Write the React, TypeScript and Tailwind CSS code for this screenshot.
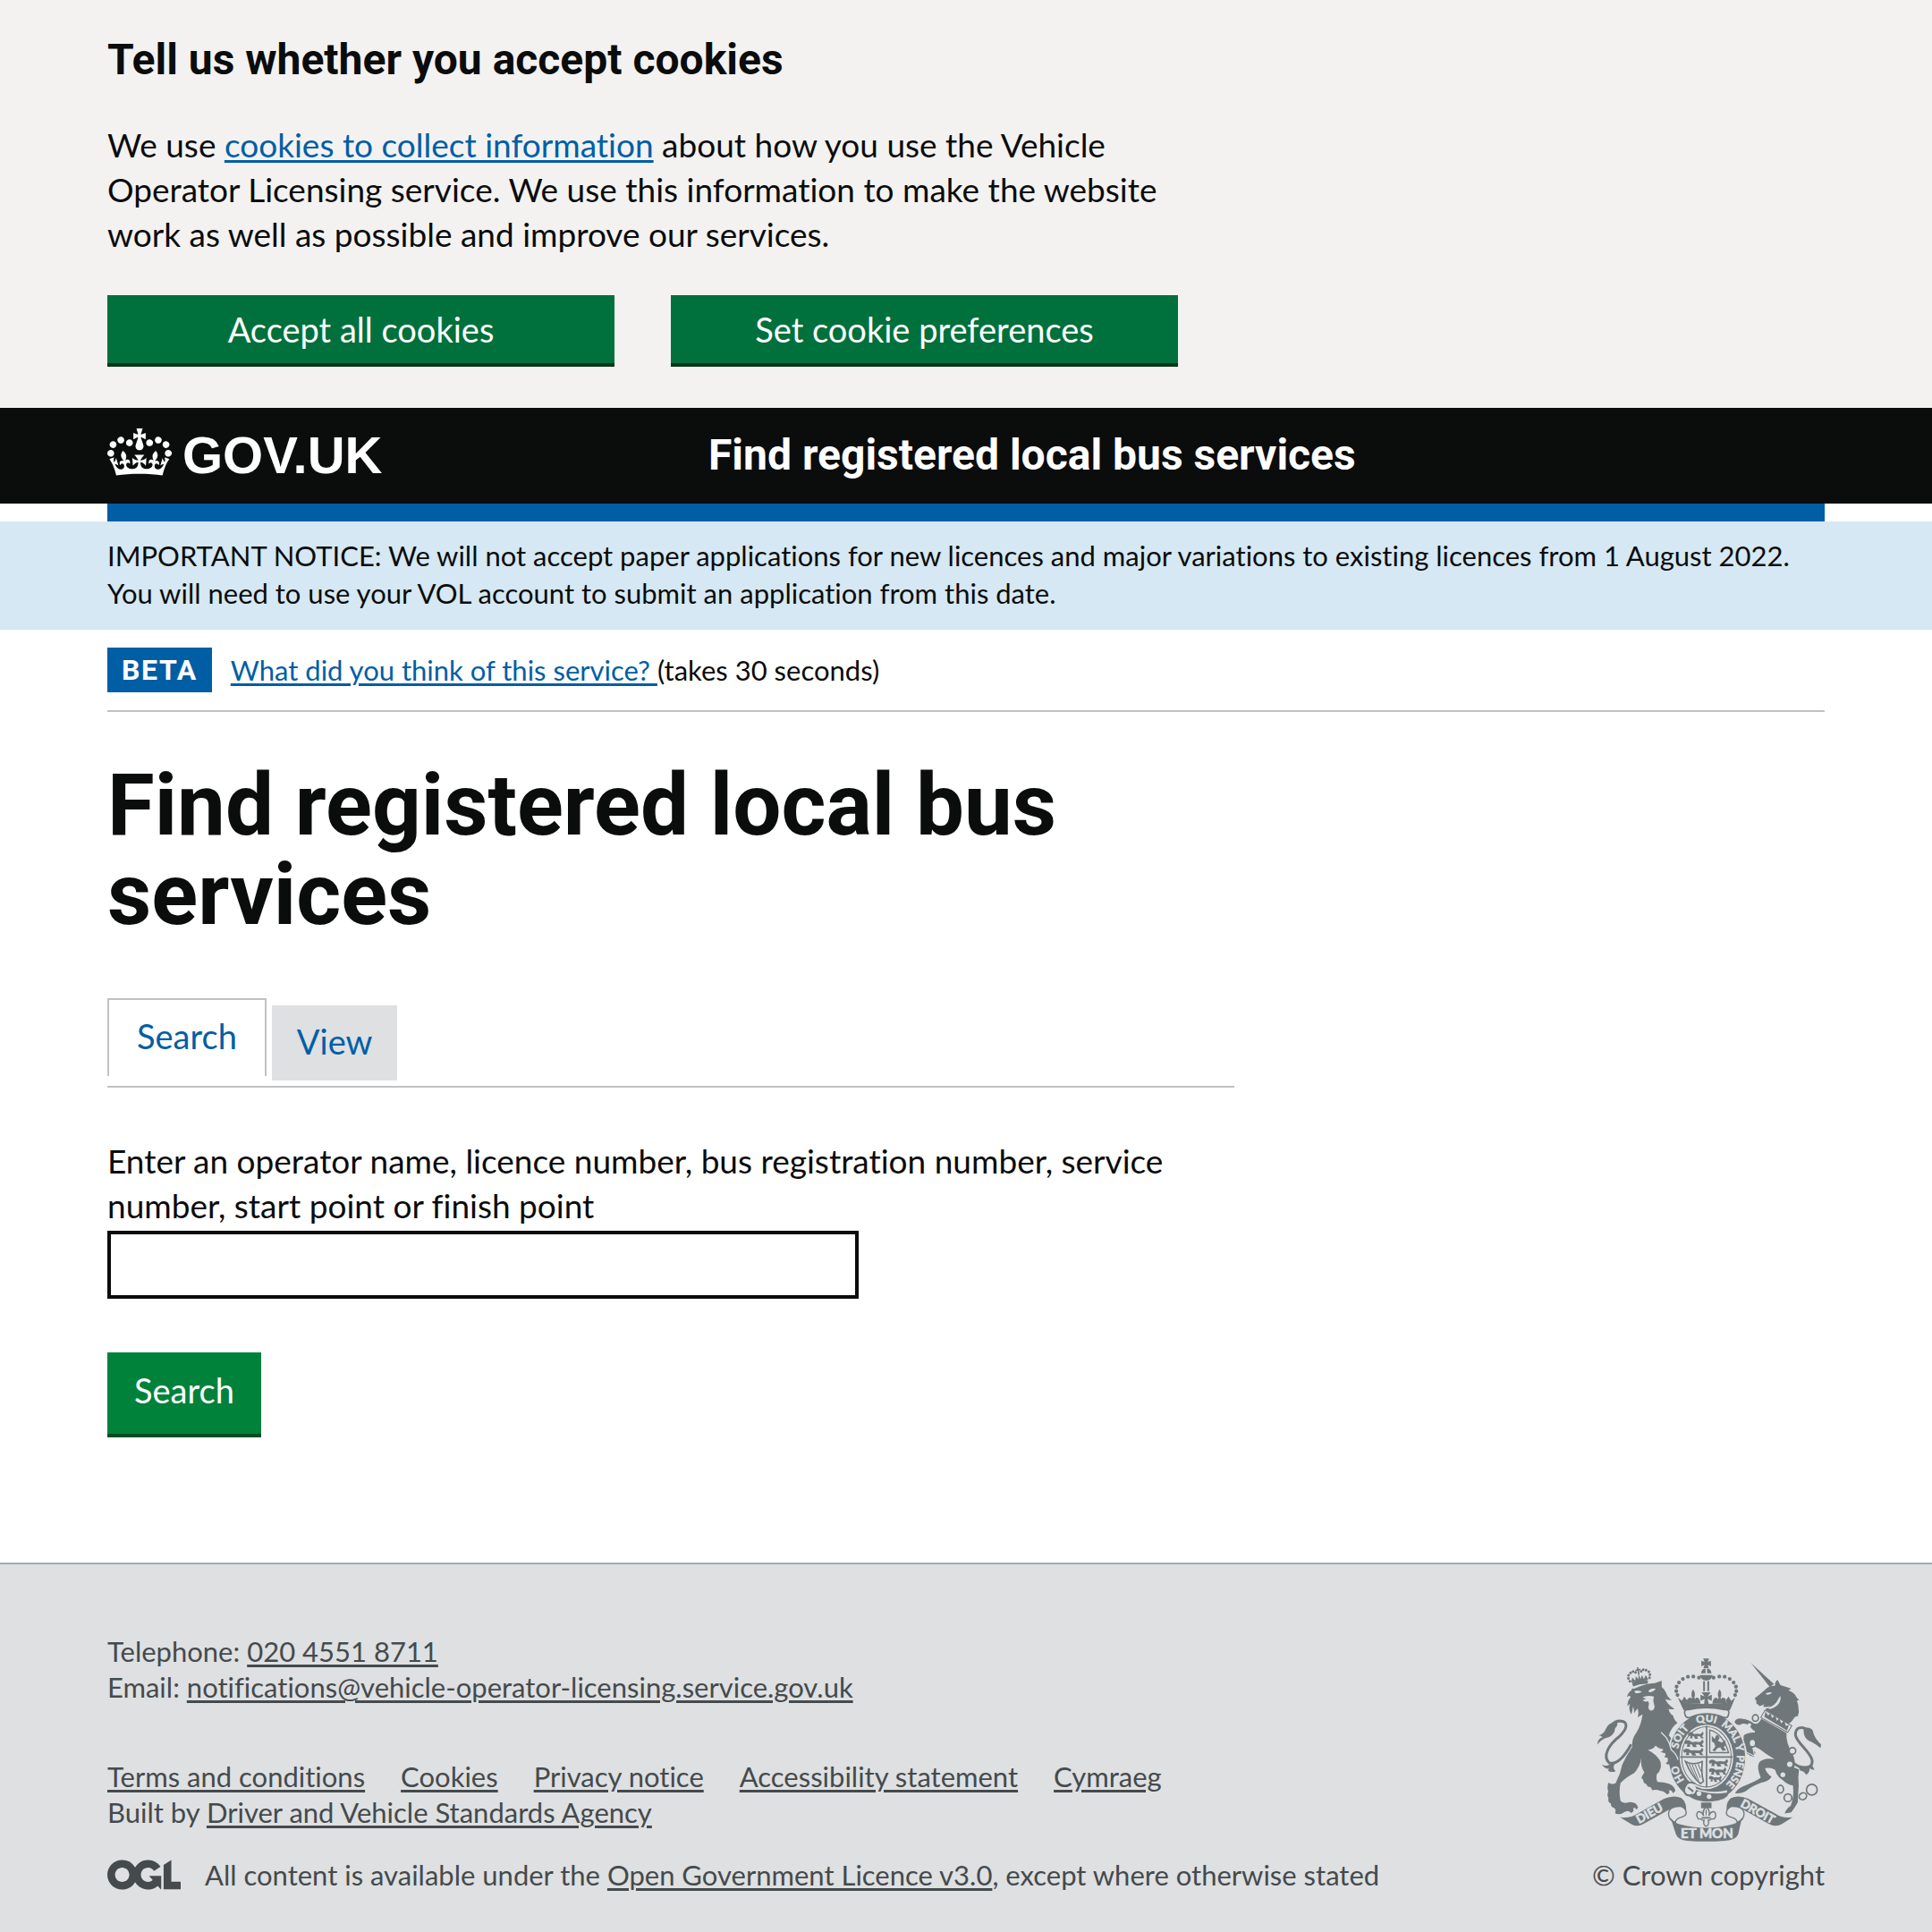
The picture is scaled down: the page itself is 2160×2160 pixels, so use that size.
import type { ReactNode } from "react";

const INK = "#6f777b";
const PAPER = "#dee0e2";

function CrownLogo() {
  return (
    <svg viewBox="0 0 132 97" className="h-[53px] w-[72px] shrink-0 self-start" fill="currentColor" aria-hidden="true">
      <path d="M25 30.2c3.5 1.5 7.7-.2 9.1-3.7 1.5-3.6-.2-7.8-3.9-9.2-3.6-1.4-7.6.3-9.1 3.9-1.4 3.5.3 7.5 3.9 9zM9 39.5c3.6 1.5 7.8-.2 9.2-3.7 1.5-3.6-.2-7.8-3.9-9.1-3.6-1.5-7.6.2-9.1 3.8-1.4 3.5.3 7.5 3.8 9zM4.4 57.2c3.5 1.5 7.7-.2 9.1-3.8 1.5-3.6-.2-7.7-3.9-9.1-3.5-1.5-7.6.3-9.1 3.8-1.4 3.5.3 7.6 3.9 9.1zm38.3-21.4c3.5 1.5 7.7-.2 9.1-3.8 1.5-3.6-.2-7.7-3.9-9.1-3.6-1.5-7.6.3-9.1 3.8-1.3 3.6.4 7.7 3.9 9.1zm64.4-5.6c-3.6 1.5-7.8-.2-9.1-3.7-1.5-3.6.2-7.8 3.8-9.2 3.6-1.4 7.7.3 9.2 3.9 1.3 3.5-.4 7.5-3.9 9zm15.9 9.3c-3.6 1.5-7.7-.2-9.1-3.7-1.5-3.6.2-7.8 3.7-9.1 3.6-1.5 7.7.2 9.2 3.8 1.5 3.5-.3 7.5-3.8 9zm4.7 17.7c-3.6 1.5-7.8-.2-9.2-3.8-1.5-3.6.2-7.7 3.9-9.1 3.6-1.5 7.7.3 9.2 3.8 1.3 3.5-.4 7.6-3.9 9.1zM89.3 35.8c-3.6 1.5-7.8-.2-9.2-3.8-1.4-3.6.2-7.7 3.9-9.1 3.6-1.5 7.7.3 9.2 3.8 1.4 3.6-.3 7.7-3.9 9.1zM69.7 17.7l8.9 4.7V9.3l-8.9 2.8c-.2-.3-.5-.6-.9-.9L72.4 0H59.6l3.5 11.2c-.3.3-.6.5-.9.9l-8.8-2.8v13.1l8.8-4.7c.3.3.6.7.9.9l-5 15.4v.1c-.2.8-.4 1.6-.4 2.4 0 4.1 3.1 7.5 7 8.1h.2c.3 0 .7.1 1 .1.4 0 .7 0 1-.1h.2c4-.6 7.1-4.1 7.1-8.1 0-.8-.1-1.7-.4-2.4V34l-5.1-15.4c.4-.2.7-.6 1-.9zM66 92.8c16.9 0 32.8 1.1 47.1 3.2 4-16.9 8.9-26.7 14-33.5l-9.6-3.4c1 4.9 1.1 7.2 0 10.2-1.5-1.4-3-4.3-4.2-8.7L108.6 76c2.8-2 5-3.2 7.5-3.3-4.4 9.4-10 11.9-13.6 11.2-4.3-.8-6.3-4.6-5.6-7.9 1-4.7 5.7-5.9 8-.5 4.3-8.7-3-11.4-7.6-8.8 7.1-7.2 7.9-13.5 2.1-21.1-8 6.1-8.1 12.3-4.5 20.8-4.7-5.4-12.1-2.5-9.5 6.2 3.4-5.2 7.9-2 7.2 3.1-.6 4.3-6.4 7.8-13.5 7.2-10.3-.9-10.9-8-11.2-13.8 2.5-.5 7.1 1.8 11 7.3L80.2 60c-4.1 4.4-8 5.3-12.3 5.4 1.4-4.4 8-11.6 8-11.6H55.5s6.4 7.2 7.9 11.6c-4.2-.1-8-1-12.3-5.4l1.4 16.4c3.9-5.5 8.5-7.7 10.9-7.3-.3 5.8-.9 12.8-11.1 13.8-7.2.6-12.9-2.9-13.5-7.2-.7-5 3.8-8.3 7.1-3.1 2.7-8.7-4.6-11.6-9.4-6.2 3.7-8.5 3.6-14.7-4.6-20.8-5.8 7.6-5 13.9 2.2 21.1-4.7-2.6-11.9.1-7.7 8.8 2.3-5.5 7.1-4.2 8.1.5.7 3.3-1.3 7.1-5.7 7.9-3.5.7-9-1.8-13.5-11.2 2.5.1 4.7 1.3 7.5 3.3l-4.7-15.4c-1.2 4.4-2.7 7.2-4.3 8.7-1.1-3-.9-5.3 0-10.2l-9.5 3.4c5 6.9 9.9 16.7 14 33.5 14.8-2.1 30.8-3.2 47.7-3.2z" />
    </svg>
  );
}

function OglLogo() {
  return (
    <svg viewBox="0 0 483.2 195.7" className="h-[34px] w-[82px] shrink-0" fill="currentColor" role="img" aria-label="Open Government Licence">
      <path d="M421.5 142.8V.1l-50.7 32.3v161.1h112.4v-50.7zm-122.3-9.6A47.12 47.12 0 0 1 221 97.8c0-26 21.1-47.1 47.1-47.1 16.7 0 31.4 8.7 39.7 21.8l42.7-27.2A97.63 97.63 0 0 0 268.1 0c-36.5 0-68.3 20.1-85.1 49.7A98 98 0 0 0 97.8 0C43.9 0 0 43.9 0 97.8s43.9 97.8 97.8 97.8c36.5 0 68.3-20.1 85.1-49.7a97.76 97.76 0 0 0 149.6 25.4l19.4 22.2h3v-87.8h-80l24.3 27.5zM97.8 145c-26 0-47.1-21.1-47.1-47.1s21.1-47.1 47.1-47.1 47.1 21.1 47.1 47.1S123.8 145 97.8 145" />
    </svg>
  );
}

const crownBeads = [
  [413, 139], [394, 135], [376, 136], [359, 143], [346, 155], [338, 169], [337, 184], [341, 197],
];

const garterWords = [
  { word: "HO", at: "13%" },
  { word: "SOIT", at: "29%" },
  { word: "QUI", at: "45%" },
  { word: "MAL", at: "57%" },
  { word: "Y", at: "69%" },
  { word: "PENSE", at: "74%" },
];

// Outline of one small passant lion, used six times on the shield.
const passant =
  "M0 6 Q4 0 9 4 L12 7 Q18 5 24 7 Q28 6 28 1 Q32 3 30 9 L28 12 L31 18 L26 18 L24 13 L18 13 L20 19 L14 19 L12 13 L9 12 L9 18 L4 18 L5 11 L1 12 Z";

function RoyalArms() {
  return (
    <svg viewBox="70 74 752 614" className="h-[205px] w-[251px]" fill={INK} role="img" aria-label="Royal coat of arms">
      {/* small crown on the lion */}
      <g transform="rotate(-10 213 140)">
        <path d="M186 152 Q213 143 240 152 L238 164 Q213 158 188 164Z" />
        <path d="M184 150 L190 134 L198 146 L203 132 L209 144 L213 128 L217 144 L223 132 L228 146 L236 134 L242 150Z" />
        <path d="M211 104 h5 v6 h6 v5 h-6 v14 h-5 v-14 h-6 v-5 h6Z" />
        {[[180, 145], [177, 135], [179, 125], [187, 118], [196, 115], [204, 119], [223, 119], [231, 115], [240, 118], [248, 125], [250, 135], [247, 145]].map(([x, y]) => (
          <circle key={`${x}-${y}`} cx={x} cy={y} r="4.4" />
        ))}
      </g>

      {/* lion */}
      <path d="M186 182 Q188 172 196 176 Q232 158 266 157 L288 149 L288 170 Q298 178 303 190 Q308 206 322 214 Q310 215 300 210 Q306 228 331 243 Q320 246 311 243 Q314 258 326 266 Q330 282 341 290 Q320 304 312 332 L336 362 Q346 384 350 408 Q350 424 342 430 Q336 440 326 437 Q330 430 324 426 Q312 432 302 426 Q312 420 308 408 L296 404 Q304 398 300 392 L284 388 Q296 382 292 378 Q276 376 268 366 Q262 378 242 381 Q272 396 284 420 Q290 446 272 462 Q268 478 274 488 Q296 488 312 494 Q330 500 334 518 L326 526 Q322 514 312 516 Q318 526 306 530 Q296 518 284 518 Q270 512 256 516 Q254 504 242 504 Q238 494 228 490 Q226 478 220 474 Q226 462 230 456 Q216 436 220 408 Q214 440 196 458 Q166 474 150 492 Q144 520 150 552 Q160 562 178 556 Q204 554 209 574 L204 580 Q200 572 192 576 Q198 586 186 592 Q176 582 166 588 Q150 600 132 594 Q136 582 130 576 Q116 572 118 560 Q106 556 110 542 Q104 532 109 520 Q104 504 110 490 Q122 498 134 492 Q150 462 156 430 Q170 400 190 370 Q186 346 204 322 Q220 296 224 262 Q216 266 208 272 Q212 256 208 242 Q200 250 196 258 Q196 244 192 236 Q190 252 186 262 Q176 244 182 226 L173 234 Q174 214 184 204 Q182 196 172 204 Q174 190 186 182Z" />
      <path fill={PAPER} d="M196 184 Q210 178 222 186 Q210 192 200 190Z M244 182 Q256 172 268 176 Q260 188 246 188Z M224 204 Q240 196 262 202 Q258 214 262 226 Q268 240 258 248 Q246 252 243 238 Q248 224 242 218 Q232 222 224 214 L236 210Z" />
      <path d="M186 362 C166 398 140 432 112 424 C88 402 112 362 146 336 C176 308 176 284 148 284 Q132 284 120 298" fill="none" stroke={INK} strokeWidth="9" />
      <path d="M72 363 Q74 342 90 338 Q84 332 78 332 Q96 326 102 308 Q112 286 138 288 Q144 296 132 308 Q130 330 110 338 Q88 342 72 363Z M88 430 Q104 438 114 428 L134 424 Q120 442 134 452 Q118 458 108 450 L112 444 Q98 446 88 430Z" />

      {/* unicorn */}
      <path d="M587 90 L664 160 L650 170Z" />
      <path d="M668 166 Q666 154 676 146 L686 164 Q706 170 722 176 Q716 180 712 181 Q734 190 738 202 Q744 212 749 213 L741 216 Q746 228 746 240 Q750 254 744 268 Q734 266 730 276 Q714 300 706 290 L634 246 L652 232 Q640 240 628 236 L632 228 L616 234 L610 228 Q602 226 606 216 Q598 212 602 206 Q618 194 636 178 Q648 164 668 166Z" />
      <path d="M636 192 Q648 184 658 190 Q650 196 640 196Z M686 200 Q690 232 652 244 L640 240 Q668 236 680 208Z" fill={PAPER} />
      <path d="M634 248 L724 300 L710 322 L620 272Z" fill={PAPER} stroke={INK} strokeWidth="3" />
      <path d="M632 270 L636 252 L644 266 L652 258 L658 274 L668 264 L674 284 L682 274 L688 292 L698 282 L704 300 L714 298 L708 316Z" />
      <path d="M622 276 L706 324 Q704 360 726 392 Q738 420 732 440 L748 446 Q744 470 747 500 Q744 540 744 556 Q734 574 722 590 L700 594 Q706 576 720 568 Q732 540 728 500 Q706 496 694 482 Q676 474 668 448 Q654 438 634 442 Q640 462 656 470 Q648 486 622 490 Q590 502 576 514 Q560 528 534 526 Q542 510 562 502 Q600 488 620 474 Q606 442 614 424 Q628 406 666 412 Q636 394 616 378 Q600 372 590 360 Q590 376 602 390 L598 404 Q584 402 570 390 Q574 376 566 366 L556 346 Q578 330 604 328 Q606 318 594 314 L582 300 Q564 288 552 296 Q540 300 532 288 Q536 274 556 276 Q584 280 596 292 Q612 298 622 276Z" />
      <path d="M728 424 C752 444 796 448 792 416 C786 386 740 358 736 330 C736 306 756 300 774 312" fill="none" stroke={INK} strokeWidth="9" />
      <path d="M764 308 Q784 302 794 316 Q800 344 822 362 L820 374 Q796 356 784 352 Q760 340 764 308Z M744 432 Q760 446 792 432 L800 448 Q788 448 784 442 Q784 458 772 464 Q766 452 752 450Z" />

      {/* garter and shield */}
      <ellipse cx="440" cy="406" rx="133" ry="153" fill={PAPER} />
      <ellipse cx="440" cy="406" rx="128" ry="148" />
      <ellipse cx="438" cy="404" rx="90" ry="108" fill={PAPER} />
      <ellipse cx="438" cy="404" rx="83" ry="101" fill="none" stroke={INK} strokeWidth="3" />
      <path d="M436 300 h5 v206 h-5Z M350 402 h176 v5 h-176Z" />
      <g>
        <path d={passant} transform="translate(376 318) scale(1.7 1.35)" />
        <path d={passant} transform="translate(364 345) scale(2.1 1.4)" />
        <path d={passant} transform="translate(360 373) scale(2.2 1.4)" />
        <path d={passant} transform="translate(446 410) scale(2.1 1.4)" />
        <path d={passant} transform="translate(446 438) scale(1.9 1.4)" />
        <path d={passant} transform="translate(446 465) scale(1.4 1.2)" />
      </g>
      <path d="M449 314 Q494 326 512 390 L449 390Z" fill="none" stroke={INK} strokeWidth="4" />
      <path d="M456 334 L466 344 L470 332 Q480 330 482 342 L476 350 L490 356 L500 348 Q506 360 496 372 L504 382 L492 384 L484 372 L474 376 L466 386 L458 382 L468 370 L464 358 L456 352Z" />
      <path d="M368 420 Q392 434 424 420 Q420 462 428 486 L418 494 Q388 470 368 420Z" fill="none" stroke={INK} strokeWidth="5" />
      <path d="M380 428 L404 478 M390 430 L412 484 M400 430 L418 474 M410 428 L420 452" stroke={INK} strokeWidth="3" />

      {/* limbs that overlap the garter */}
      <path d="M284 320 L304 340 Q316 358 320 380 Q338 394 342 414 Q344 430 334 434 L324 434 L326 428 Q312 432 302 426 Q312 420 308 408 L290 360Z" />
      <path d="M286 322 L304 340 Q316 358 320 380 Q338 394 343 414" fill="none" stroke={PAPER} strokeWidth="4" />
      <path d="M604 320 Q578 320 562 330 Q558 348 566 362 L572 388 L600 402 L590 360 L604 350Z" stroke={PAPER} strokeWidth="3" />
      <path d="M600 316 h24 v44 h-24Z" />

      <path id="garter" d="M440 523 A100 118 0 0 1 440 287 A100 118 0 0 1 440 523" fill="none" />
      <g fill={PAPER} stroke={PAPER} strokeWidth="1.5" fontFamily="Lato, sans-serif" fontWeight="700" fontSize="35">
        {garterWords.map(({ word, at }) => (
          <text key={word}>
            <textPath href="#garter" startOffset={at}>{word}</textPath>
          </text>
        ))}
      </g>
      <path d="M374 498 Q440 532 508 516 L504 532 Q440 546 384 512Z" fill={PAPER} />
      <path d="M378 502 Q440 536 504 524 Q520 530 496 544 Q440 568 384 528Z" />
      <circle cx="383" cy="512" r="20" fill={PAPER} />
      <path d="M400 494 Q376 482 368 502 Q360 512 366 526 Q374 538 392 530 M376 506 L394 520" fill="none" stroke={INK} strokeWidth="6" />
      <circle cx="413" cy="527" r="8" fill={PAPER} />
      <circle cx="447" cy="537" r="8" fill={PAPER} />

      {/* unicorn's chain and spots */}
      <g fill={PAPER} stroke={INK} strokeWidth="5">
        <ellipse cx="602" cy="274" rx="10" ry="11" />
        <ellipse cx="592" cy="358" rx="11" ry="13" />
        <circle cx="726" cy="384" r="11" />
        <ellipse cx="686" cy="512" rx="10" ry="13" />
        <circle cx="711" cy="541" r="13" />
        <ellipse cx="761" cy="536" rx="13" ry="11" transform="rotate(-30 761 536)" />
        <circle cx="791" cy="514" r="18" />
      </g>
      <g fill={PAPER}>
        <circle cx="582" cy="297" r="6" />
        <circle cx="717" cy="429" r="9" />
        <circle cx="694" cy="464" r="8" />
      </g>

      {/* royal crown */}
      <path d="M366 262 Q360 244 378 246 Q437 232 498 246 Q518 244 512 262 Q510 276 496 272 Q437 248 384 272 Q370 276 366 262Z" fill={PAPER} stroke={INK} strokeWidth="5" />
      <path d="M342 206 Q354 214 362 222 Q437 232 514 222 Q524 214 534 206 L520 240 Q518 250 508 248 Q437 230 370 248 Q360 250 358 240Z" />
      <path d="M352 222 L364 202 L374 216 L366 226Z M524 222 L512 202 L502 216 L510 226Z M370 226 Q372 204 386 206 Q390 210 386 214 L390 206 Q384 192 393 178 Q404 192 397 206 L402 214 Q398 208 404 206 Q416 204 418 226Z M458 226 Q460 204 472 206 Q478 210 474 214 L479 206 Q472 192 482 178 Q492 192 485 206 L490 214 Q486 208 492 206 Q504 204 506 226Z M422 188 H452 L442 202 L456 196 V216 L442 210 L446 228 H430 L432 210 L418 216 V196 L432 202Z" />
      {crownBeads.map(([x, y]) => (
        <g key={`${x}-${y}`}>
          <circle cx={x} cy={y} r="6.4" />
          <circle cx={875 - x} cy={y} r="6.4" />
        </g>
      ))}
      <path d="M427 75 H447 L442 86 L453 82 V101 L442 96 L446 107 H428 L432 96 L421 101 V82 L432 86Z M420 124 Q422 108 435 108 V124Z M440 108 Q453 108 455 124 H440Z M416 130 H459 Q456 148 437 148 Q420 148 416 130Z M427 150 h6 v34 h-6Z M441 150 h6 v34 h-6Z" />

      {/* ribbon */}
      <path d="M148 606 Q180 612 208 594 L296 544 Q330 530 354 542 Q372 556 370 586 Q352 566 322 576 L228 628 Q204 642 184 628Z" />
      <path d="M727 606 Q694 612 668 594 L578 544 Q546 530 520 542 Q502 556 506 586 Q522 566 552 576 L646 628 Q670 642 692 628Z" />
      <g fill={PAPER} stroke={INK} strokeWidth="4">
        <path d="M352 570 Q312 568 311 596 Q312 616 334 624 Q334 612 354 606 Q372 602 370 588 Q366 574 352 570Z" />
        <path d="M523 570 Q563 568 564 596 Q563 616 541 624 Q541 612 521 606 Q503 602 505 588 Q509 574 523 570Z" />
      </g>
      <path d="M318 608 Q326 622 348 630 Q437 654 526 630 Q548 622 557 608 L544 664 Q536 682 500 685 Q437 690 374 685 Q344 682 336 664Z" />
      <g fill={PAPER} stroke={PAPER} strokeWidth="2" fontFamily="Lato, sans-serif" fontWeight="700">
        <text x="352" y="677" fontSize="45">ET MON</text>
        <text x="212" y="628" fontSize="40" transform="rotate(-29 212 628)">DIEU</text>
        <text x="549" y="569" fontSize="40" transform="rotate(29 549 569)">DROIT</text>
      </g>
      <path d="M420 557 H455 V576 H420Z" />
      <path d="M437 572 Q452 584 446 602 Q452 586 464 588 Q474 598 464 612 H454 Q450 618 444 616 Q448 634 437 636 Q426 634 430 616 Q424 618 420 612 H411 Q400 598 410 588 Q422 586 429 602 Q422 584 437 572Z" fill={PAPER} stroke={INK} strokeWidth="4" />
      <path d="M437 576 Q442 590 437 606 Q432 590 437 576Z M422 606 h30 v5 h-30Z" />
    </svg>
  );
}

function Container({ className = "", children }: { className?: string; children?: ReactNode }) {
  return <div className={`mx-[120px] ${className}`}>{children}</div>;
}

const linkLine = "underline decoration-[3px] underline-offset-[3px]";

const footerLinks = ["Terms and conditions", "Cookies", "Privacy notice", "Accessibility statement", "Cymraeg"];

export default function App() {
  return (
    <div className="flex min-h-screen flex-col bg-white font-['Lato',sans-serif] text-[37px] leading-[50px] text-[#0b0c0c] [font-variant-ligatures:none]">
      <section aria-label="Cookies" className="bg-[#f3f2f1] pt-[37px] pb-[46px]">
        <Container>
          <div className="w-[63%] max-w-[1197px]">
            <h2 className="font-['Roboto',sans-serif] text-[48px] leading-[60px] font-bold">Tell us whether you accept cookies</h2>
            <p className="mt-10">
              We use <a href="#cookies" className={`text-[#005ea5] ${linkLine}`}>cookies to collect information</a> about how you use the Vehicle Operator Licensing service. We use this information to make the website work as well as possible and improve our services.
            </p>
            <div className="mt-[43px] grid grid-cols-2 gap-[63px] text-[38px]">
              <button type="button" className="border-b-4 border-[#003618] bg-[#00703c] py-[13px] text-white">Accept all cookies</button>
              <button type="button" className="border-b-4 border-[#003618] bg-[#00703c] py-[13px] text-white">Set cookie preferences</button>
            </div>
          </div>
        </Container>
      </section>

      <header className="bg-[#0b0c0c] text-white">
        <Container className="flex pt-[23px] pb-6">
          <div className="flex w-[35%] shrink-0">
            <a href="#home" className="flex items-center gap-3">
              <CrownLogo />
              <span className="font-['Liberation_Sans',Arial,sans-serif] text-[58px] leading-[60px] font-bold">GOV.UK</span>
            </a>
          </div>
          <a href="#service" className="font-['Roboto',sans-serif] text-[48px] leading-[60px] font-bold">Find registered local bus services</a>
        </Container>
      </header>
      <Container className="h-5 bg-[#005ea5]" />

      <div className="bg-[#d5e8f3] pt-[17px] pb-5 text-[31px] leading-[42px]">
        <Container>
          <p>IMPORTANT NOTICE: We will not accept paper applications for new licences and major variations to existing licences from 1 August 2022. You will need to use your VOL account to submit an application from this date.</p>
        </Container>
      </div>

      <Container className="flex items-center gap-[21px] border-b-2 border-[#bfc1c3] py-5 text-[31px]">
        <strong className="bg-[#005ea5] px-4 font-['Roboto',sans-serif] text-[32px] font-bold tracking-wider text-white">BETA</strong>
        <p className="whitespace-pre-wrap"><a href="#feedback" className={`text-[#005ea5] ${linkLine}`}>What did you think of this service? </a>(takes 30 seconds)</p>
      </Container>

      <main className="grow">
        <Container>
          <div className="w-[66%] max-w-[1260px]">
            <h1 className="mt-[54px] font-['Roboto',sans-serif] text-[96px] leading-[100px] font-bold">Find registered local bus services</h1>
            <nav aria-label="Bus services" className="mt-[66px] flex items-start gap-1.5 border-b-2 border-[#bfc1c3] pb-1.5 text-[38px] text-[#005ea5]">
              <a href="#search" aria-current="page" className="border-x-2 border-t-2 border-[#bfc1c3] px-[31px] pt-[15px] pb-5">Search</a>
              <a href="#view" className="mt-2 bg-[#dee0e2] px-7 pt-[15px] pb-[19px]">View</a>
            </nav>
            <form className="mt-[57px]" onSubmit={(event) => event.preventDefault()}>
              <label htmlFor="query" className="block">Enter an operator name, licence number, bus registration number, service number, start point or finish point</label>
              <input id="query" type="text" className="mt-[3px] block h-[76px] w-[840px] max-w-full rounded-none border-4 border-[#0b0c0c] bg-white px-2" />
              <button type="submit" className="mt-[60px] block border-b-4 border-[#004d23] bg-[#00823b] px-[30px] pt-[17px] pb-6 text-[38px] text-white">Search</button>
            </form>
          </div>
        </Container>
      </main>

      <footer className="mt-[140px] border-t-2 border-[#a1acb2] bg-[#dee0e2] pt-[77px] pb-11 text-[31px] leading-10 text-[#454a4c]">
        <Container className="flex items-end justify-between">
          <div>
            <p>Telephone: <a href="tel:02045518711" className={linkLine}>020 4551 8711</a></p>
            <p>Email: <a href="mailto:notifications@vehicle-operator-licensing.service.gov.uk" className={linkLine}>notifications@vehicle-operator-licensing.service.gov.uk</a></p>
            <ul className="mt-[60px] flex flex-wrap gap-x-10">
              {footerLinks.map((label) => (
                <li key={label}><a href="#footer" className={linkLine}>{label}</a></li>
              ))}
            </ul>
            <p>Built by <a href="#dvsa" className={linkLine}>Driver and Vehicle Standards Agency</a></p>
            <div className="mt-[30px] flex items-center gap-[27px]">
              <OglLogo />
              <p>All content is available under the <a href="#ogl" className={linkLine}>Open Government Licence v3.0</a>, except where otherwise stated</p>
            </div>
          </div>
          <a href="#copyright" className="flex flex-col items-center gap-[17px]">
            <RoyalArms />
            <span>© Crown copyright</span>
          </a>
        </Container>
      </footer>
    </div>
  );
}
